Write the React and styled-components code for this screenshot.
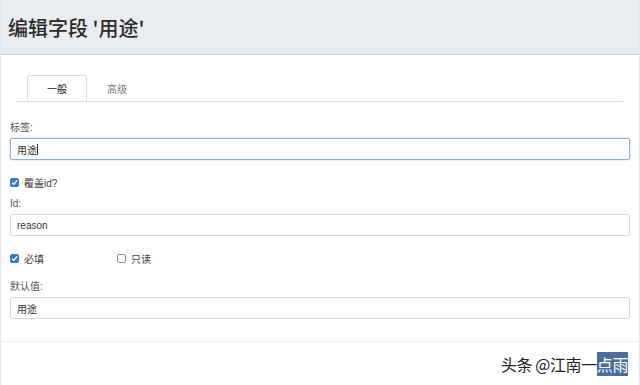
import styled, { createGlobalStyle } from "styled-components";

const Global = createGlobalStyle`
  html, body {
    margin: 0;
    padding: 0;
    background: #fff;
    font-family: "Helvetica Neue", "Liberation Sans", "Noto Sans CJK SC", sans-serif;
  }
`;

const Modal = styled.div`
  position: relative;
  width: 640px;
  height: 385px;
  box-sizing: border-box;
  background: #fff;
  border-left: 1px solid #e4e8ee;
  border-right: 1px solid #e4e8ee;
  overflow: hidden;
`;

const Header = styled.div`
  height: 55px;
  box-sizing: border-box;
  background: #e9ecf0;
  border-bottom: 1px solid #cdd2d9;
  display: flex;
  align-items: center;
  padding-left: 7px;
`;

const Title = styled.h3`
  margin: 0;
  font-size: 20px;
  font-weight: 500;
  color: #2a2a2a;
  font-family: "Noto Sans CJK SC", "Liberation Sans", sans-serif;
`;

const Body = styled.div`
  padding: 20px 9px 0 9px;
`;

const TabNav = styled.div`
  display: flex;
  margin: 0 7px 0 6px;
  padding-left: 11px;
  border-bottom: 1px solid #d9dde2;
  height: 26px;
`;

const Tab = styled.div`
  width: 60px;
  height: 26px;
  box-sizing: border-box;
  display: flex;
  align-items: center;
  justify-content: center;
  font-size: 10px;
  color: ${({ active }) => (active ? "#222" : "#777")};
  background: #fff;
  border: 1px solid ${({ active }) => (active ? "#d9dde2" : "transparent")};
  border-bottom: ${({ active }) => (active ? "1px solid #fff" : "none")};
  border-radius: 3px 3px 0 0;
  margin-bottom: -1px;
`;

const Label = styled.div`
  font-size: 10px;
  line-height: 12px;
  color: #555;
  margin-top: ${({ top }) => top}px;
  margin-bottom: 4px;
`;

const Input = styled.div`
  height: 22px;
  box-sizing: border-box;
  border: 1px solid ${({ focus }) => (focus ? "#86ade6" : "#d7dbe0")};
  box-shadow: ${({ focus }) => (focus ? "0 0 2px rgba(102,160,230,0.5)" : "none")};
  border-radius: 2px;
  display: flex;
  align-items: center;
  padding-left: 6px;
  font-size: 10px;
  color: #333;
`;

const Caret = styled.span`
  display: inline-block;
  width: 1px;
  height: 11px;
  background: #333;
`;

const CheckRow = styled.div`
  display: grid;
  grid-template-columns: 107px auto;
  height: 14px;
  align-items: center;
  margin-top: ${({ top }) => top}px;
`;

const Check = styled.label`
  display: flex;
  align-items: center;
  gap: 5px;
  font-size: 10px;
  color: #444;
`;

const Box = styled.span`
  width: 9px;
  height: 9px;
  box-sizing: border-box;
  border-radius: 2px;
  background: ${({ checked }) => (checked ? "#3778df" : "#fff")};
  border: 1px solid ${({ checked }) => (checked ? "#3778df" : "#8a8f96")};
  display: flex;
  align-items: center;
  justify-content: center;
`;

const Separator = styled.div`
  margin-top: 22px;
  border-top: 1px solid #e8ebef;
  margin-left: -9px;
  margin-right: -9px;
`;

const Footer = styled.div`
  display: flex;
  justify-content: flex-end;
  padding: 10px 2px 0 0;
`;

const Mark = styled.div`
  font-size: 16px;
  color: #222;
  font-family: "Noto Sans CJK SC", sans-serif;
  letter-spacing: -0.4px;
  span {
    background: #4a6e9c;
    color: #fff;
  }
`;

const Tick = () => (
  <svg width="7" height="7" viewBox="0 0 8 8">
    <path d="M1.2 4.2 L3.2 6.1 L6.9 1.6" fill="none" stroke="#fff" strokeWidth="1.6" />
  </svg>
);

const CheckBox = ({ checked, children }) => (
  <Check>
    <Box checked={checked}>{checked && <Tick />}</Box>
    {children}
  </Check>
);

export default function App() {
  return (
    <Modal>
      <Global />
      <Header>
        <Title>编辑字段 '用途'</Title>
      </Header>
      <Body>
        <TabNav>
          <Tab active>一般</Tab>
          <Tab>高级</Tab>
        </TabNav>
        <Label top={20}>标签:</Label>
        <Input focus>
          用途<Caret />
        </Input>
        <CheckRow top={15}>
          <CheckBox checked>覆盖id?</CheckBox>
        </CheckRow>
        <Label top={9}>Id:</Label>
        <Input>reason</Input>
        <CheckRow top={15}>
          <CheckBox checked>必填</CheckBox>
          <CheckBox>只读</CheckBox>
        </CheckRow>
        <Label top={16}>默认值:</Label>
        <Input>用途</Input>
        <Separator />
        <Footer>
          <Mark>
            头条 @江南一<span>点雨</span>
          </Mark>
        </Footer>
      </Body>
    </Modal>
  );
}
